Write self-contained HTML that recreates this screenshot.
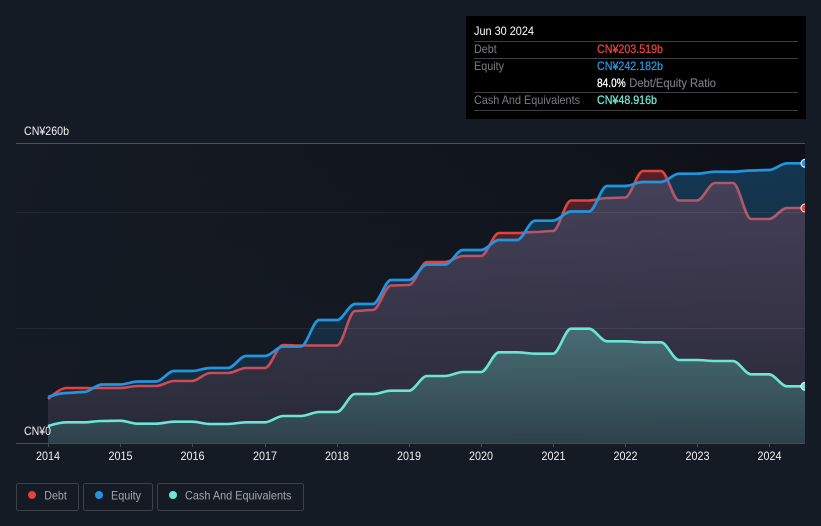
<!DOCTYPE html>
<html><head><meta charset="utf-8"><style>
html,body{margin:0;padding:0;background:#151b24;width:821px;height:526px;overflow:hidden}
svg{display:block;font-family:"Liberation Sans","Noto Sans CJK SC",sans-serif}
</style></head><body>
<svg width="821" height="526" viewBox="0 0 821 526" xmlns="http://www.w3.org/2000/svg">
<defs>
<linearGradient id="bg" x1="0" y1="0" x2="1" y2="0.15"><stop offset="0" stop-color="#151b24"/><stop offset="0.55" stop-color="#11151d"/><stop offset="1" stop-color="#0d1016"/></linearGradient>
<linearGradient id="bgv" gradientUnits="userSpaceOnUse" x1="0" y1="143" x2="0" y2="443"><stop offset="0" stop-color="#151b24" stop-opacity="0"/><stop offset="1" stop-color="#151b24" stop-opacity="1"/></linearGradient>
<linearGradient id="fr" gradientUnits="userSpaceOnUse" x1="0" y1="143" x2="0" y2="443"><stop offset="0" stop-color="#e64141" stop-opacity=".34"/><stop offset="1" stop-color="#e64141" stop-opacity=".08"/></linearGradient>
<linearGradient id="fb" gradientUnits="userSpaceOnUse" x1="0" y1="143" x2="0" y2="443"><stop offset="0" stop-color="#2394df" stop-opacity=".3"/><stop offset="1" stop-color="#2394df" stop-opacity=".09"/></linearGradient>
<linearGradient id="fc" gradientUnits="userSpaceOnUse" x1="0" y1="320" x2="0" y2="443"><stop offset="0" stop-color="#6ce5d2" stop-opacity=".34"/><stop offset="1" stop-color="#6ce5d2" stop-opacity=".13"/></linearGradient>
<clipPath id="c"><rect x="16" y="130" width="789" height="320"/></clipPath>
</defs>
<rect x="0" y="0" width="821" height="526" fill="#151b24"/>
<rect x="16" y="143" width="789" height="301" fill="url(#bg)"/>
<rect x="16" y="143" width="789" height="301" fill="url(#bgv)"/>

<g clip-path="url(#c)">
<path fill="url(#fr)" d="M48 399S60 388 66 388S78 388 84 388S96 388 102 388S114 388 120 388S132 386 138 386S150 386 156 386S168 381 174 381S186 381 192 381S204 373 210 373S222 373 228 373S240 368 246 368S259 368 265 368S277 345 283 345S295 345.5 301 345.5S313 345.5 319 345.5S331 345.5 337 345.5S349 311 355 311S367 310 373 310S385 285.5 391 285.5S403 285 409 285S421 262 427 262S439 262 445 262S457 256 463 256S475 256 481 256S493 233 499 233S511 233 517 233S529 232 535 232S547 231 553 231S565 200.5 571 200.5S583 200.5 589 200.5S601 198 607 198S619 197.5 625 197.5S637 171 643 171S655 171 661 171S673 200.5 679 200.5S691 200.5 697 200.5S709 183 715 183S727 183 733 183S745 219 751 219S763 219 769 219S781 208 787 208S799 208 805 208L805 443.5L48 443.5Z"/>
<path fill="none" stroke="#e64141" stroke-width="2.6" d="M48 399S60 388 66 388S78 388 84 388S96 388 102 388S114 388 120 388S132 386 138 386S150 386 156 386S168 381 174 381S186 381 192 381S204 373 210 373S222 373 228 373S240 368 246 368S259 368 265 368S277 345 283 345S295 345.5 301 345.5S313 345.5 319 345.5S331 345.5 337 345.5S349 311 355 311S367 310 373 310S385 285.5 391 285.5S403 285 409 285S421 262 427 262S439 262 445 262S457 256 463 256S475 256 481 256S493 233 499 233S511 233 517 233S529 232 535 232S547 231 553 231S565 200.5 571 200.5S583 200.5 589 200.5S601 198 607 198S619 197.5 625 197.5S637 171 643 171S655 171 661 171S673 200.5 679 200.5S691 200.5 697 200.5S709 183 715 183S727 183 733 183S745 219 751 219S763 219 769 219S781 208 787 208S799 208 805 208"/>
<path fill="url(#fb)" d="M48 397S60 393 66 393S78 392 84 392S96 384.5 102 384.5S114 384.5 120 384.5S132 381.5 138 381.5S150 381.5 156 381.5S168 371 174 371S186 371 192 371S204 368 210 368S222 368 228 368S240 356 246 356S259 356 265 356S277 346.5 283 346.5S295 346.5 301 346.5S313 320 319 320S331 320 337 320S349 304 355 304S367 304 373 304S385 280 391 280S403 280 409 280S421 264.5 427 264.5S439 264.5 445 264.5S457 250 463 250S475 250 481 250S493 240 499 240S511 240 517 240S529 220.7 535 220.7S547 220.7 553 220.7S565 211.5 571 211.5S583 211.5 589 211.5S601 186 607 186S619 186 625 186S637 182 643 182S655 182 661 182S673 173.7 679 173.7S691 173.7 697 173.7S709 171.7 715 171.7S727 171.7 733 171.7S745 170.5 751 170.5S763 170 769 170S781 163.3 787 163.3S799 163.3 805 163.3L805 443.5L48 443.5Z"/>
<path fill="url(#fc)" d="M48 426S60 422.3 66 422.3S78 422.3 84 422.3S96 421 102 421S114 420.7 120 420.7S132 423.7 138 423.7S150 423.7 156 423.7S168 421.7 174 421.7S186 421.7 192 421.7S204 424 210 424S222 424 228 424S240 422.3 246 422.3S259 422.3 265 422.3S277 416 283 416S295 416 301 416S313 412 319 412S331 412 337 412S349 394 355 394S367 394 373 394S385 390.7 391 390.7S403 390.7 409 390.7S421 376 427 376S439 376 445 376S457 372 463 372S475 372 481 372S493 352.3 499 352.3S511 352.3 517 352.3S529 353.7 535 353.7S547 353.7 553 353.7S565 328.7 571 328.7S583 328.7 589 328.7S601 341.3 607 341.3S619 341.3 625 341.3S637 342.3 643 342.3S655 342.3 661 342.3S673 360 679 360S691 360 697 360S709 361 715 361S727 361 733 361S745 374.3 751 374.3S763 374.3 769 374.3S781 386.3 787 386.3S799 386.3 805 386.3L805 443.5L48 443.5Z"/>
<rect x="16" y="212" width="789" height="1" fill="#fff" fill-opacity=".07"/>
<rect x="16" y="328" width="789" height="1" fill="#fff" fill-opacity=".07"/>
<path fill="none" stroke="#2394df" stroke-width="2.7" d="M48 397S60 393 66 393S78 392 84 392S96 384.5 102 384.5S114 384.5 120 384.5S132 381.5 138 381.5S150 381.5 156 381.5S168 371 174 371S186 371 192 371S204 368 210 368S222 368 228 368S240 356 246 356S259 356 265 356S277 346.5 283 346.5S295 346.5 301 346.5S313 320 319 320S331 320 337 320S349 304 355 304S367 304 373 304S385 280 391 280S403 280 409 280S421 264.5 427 264.5S439 264.5 445 264.5S457 250 463 250S475 250 481 250S493 240 499 240S511 240 517 240S529 220.7 535 220.7S547 220.7 553 220.7S565 211.5 571 211.5S583 211.5 589 211.5S601 186 607 186S619 186 625 186S637 182 643 182S655 182 661 182S673 173.7 679 173.7S691 173.7 697 173.7S709 171.7 715 171.7S727 171.7 733 171.7S745 170.5 751 170.5S763 170 769 170S781 163.3 787 163.3S799 163.3 805 163.3"/>
<path fill="none" stroke="#6ce5d2" stroke-width="2.6" d="M48 426S60 422.3 66 422.3S78 422.3 84 422.3S96 421 102 421S114 420.7 120 420.7S132 423.7 138 423.7S150 423.7 156 423.7S168 421.7 174 421.7S186 421.7 192 421.7S204 424 210 424S222 424 228 424S240 422.3 246 422.3S259 422.3 265 422.3S277 416 283 416S295 416 301 416S313 412 319 412S331 412 337 412S349 394 355 394S367 394 373 394S385 390.7 391 390.7S403 390.7 409 390.7S421 376 427 376S439 376 445 376S457 372 463 372S475 372 481 372S493 352.3 499 352.3S511 352.3 517 352.3S529 353.7 535 353.7S547 353.7 553 353.7S565 328.7 571 328.7S583 328.7 589 328.7S601 341.3 607 341.3S619 341.3 625 341.3S637 342.3 643 342.3S655 342.3 661 342.3S673 360 679 360S691 360 697 360S709 361 715 361S727 361 733 361S745 374.3 751 374.3S763 374.3 769 374.3S781 386.3 787 386.3S799 386.3 805 386.3"/>
<circle cx="805" cy="163.3" r="4" fill="#2394df" stroke="#fff" stroke-width="1"/>
<circle cx="805" cy="208" r="4" fill="#e64141" stroke="#fff" stroke-width="1"/>
<circle cx="805" cy="386.3" r="4" fill="#6ce5d2" stroke="#fff" stroke-width="1"/>
</g>

<rect x="16" y="143" width="789" height="1" fill="#4b4f56"/>
<rect x="16" y="443" width="789" height="1" fill="#474b52"/>
<g fill="#474b52">
<rect x="48" y="443" width="1" height="4"/><rect x="120" y="443" width="1" height="4"/><rect x="192" y="443" width="1" height="4"/><rect x="265" y="443" width="1" height="4"/><rect x="337" y="443" width="1" height="4"/><rect x="409" y="443" width="1" height="4"/><rect x="481" y="443" width="1" height="4"/><rect x="553" y="443" width="1" height="4"/><rect x="625" y="443" width="1" height="4"/><rect x="697" y="443" width="1" height="4"/><rect x="769" y="443" width="1" height="4"/>
</g>

<g fill="#f0f1f2" font-size="12">
<text x="24" y="135" textLength="45" lengthAdjust="spacingAndGlyphs">CN¥260b</text>
<text x="24" y="435" textLength="27" lengthAdjust="spacingAndGlyphs">CN¥0</text>
</g>
<g fill="#f0f1f2" font-size="12">
<text x="36" y="460" textLength="24" lengthAdjust="spacingAndGlyphs">2014</text><text x="108.5" y="460" textLength="24" lengthAdjust="spacingAndGlyphs">2015</text><text x="180.5" y="460" textLength="24" lengthAdjust="spacingAndGlyphs">2016</text><text x="253" y="460" textLength="24" lengthAdjust="spacingAndGlyphs">2017</text><text x="325" y="460" textLength="24" lengthAdjust="spacingAndGlyphs">2018</text><text x="397" y="460" textLength="24" lengthAdjust="spacingAndGlyphs">2019</text><text x="469" y="460" textLength="24" lengthAdjust="spacingAndGlyphs">2020</text><text x="541.5" y="460" textLength="24" lengthAdjust="spacingAndGlyphs">2021</text><text x="613.5" y="460" textLength="24" lengthAdjust="spacingAndGlyphs">2022</text><text x="685.5" y="460" textLength="24" lengthAdjust="spacingAndGlyphs">2023</text><text x="757.5" y="460" textLength="24" lengthAdjust="spacingAndGlyphs">2024</text>
</g>

<rect x="466" y="16" width="340" height="103" fill="#000"/>
<g fill="#3e4043">
<rect x="474" y="41" width="324" height="1"/><rect x="474" y="58" width="324" height="1"/><rect x="474" y="92" width="324" height="1"/><rect x="474" y="110" width="324" height="1"/>
</g>
<g font-size="12">
<text x="474" y="35" fill="#fff" textLength="60" lengthAdjust="spacingAndGlyphs">Jun 30 2024</text>
<text x="474" y="53" fill="#7b7d80" textLength="22.7" lengthAdjust="spacingAndGlyphs">Debt</text>
<text x="474" y="70" fill="#7b7d80" textLength="30" lengthAdjust="spacingAndGlyphs">Equity</text>
<text x="474" y="104" fill="#7b7d80" textLength="106" lengthAdjust="spacingAndGlyphs">Cash And Equivalents</text>
<text x="597" y="53" fill="#e64141" stroke="#e64141" stroke-width=".3" textLength="66" lengthAdjust="spacingAndGlyphs">CN¥203.519b</text>
<text x="597" y="70" fill="#2394df" stroke="#2394df" stroke-width=".3" textLength="66" lengthAdjust="spacingAndGlyphs">CN¥242.182b</text>
<text x="597" y="87" fill="#fff" stroke="#fff" stroke-width=".3" textLength="28.7" lengthAdjust="spacingAndGlyphs">84.0%</text>
<text x="629.3" y="87" fill="#7b7d80" stroke="#7b7d80" stroke-width=".15" textLength="86.7" lengthAdjust="spacingAndGlyphs">Debt/Equity Ratio</text>
<text x="597" y="104" fill="#6ce5d2" stroke="#6ce5d2" stroke-width=".3" textLength="60" lengthAdjust="spacingAndGlyphs">CN¥48.916b</text>
</g>

<g fill="none" stroke="#3d4149" stroke-width="1">
<rect x="16.5" y="483.5" width="62" height="27" rx="2"/>
<rect x="83.5" y="483.5" width="69" height="27" rx="2"/>
<rect x="157.5" y="483.5" width="146" height="27" rx="2"/>
</g>
<circle cx="32" cy="495" r="4" fill="#e64141"/>
<circle cx="99" cy="495" r="4" fill="#2394df"/>
<circle cx="173" cy="495" r="4" fill="#6ce5d2"/>
<g fill="#a3a6aa" font-size="12">
<text x="44.3" y="499.5" textLength="22.5" lengthAdjust="spacingAndGlyphs">Debt</text>
<text x="111" y="499.5" textLength="30" lengthAdjust="spacingAndGlyphs">Equity</text>
<text x="185" y="499.5" textLength="106.5" lengthAdjust="spacingAndGlyphs">Cash And Equivalents</text>
</g>
</svg>
</body></html>
